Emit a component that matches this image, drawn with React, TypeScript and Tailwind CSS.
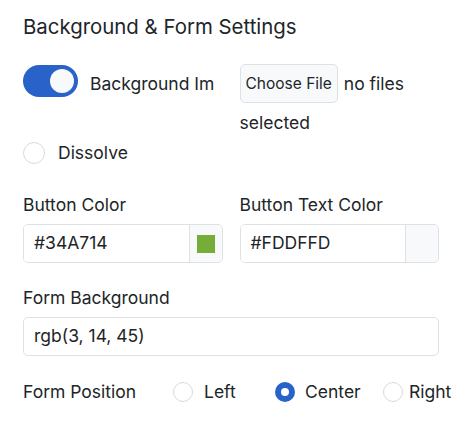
import React from 'react';

interface PositionOption {
  label: string;
  width: string;
  gap: string;
  checked: boolean;
}

const positions: PositionOption[] = [
  { label: 'Left', width: 'w-[102px]', gap: 'gap-[11px]', checked: false },
  { label: 'Center', width: 'w-[108px]', gap: 'gap-[10px]', checked: true },
  { label: 'Right', width: 'w-auto', gap: 'gap-[6px]', checked: false },
];

const Radio = ({ checked, size }: { checked: boolean; size: string }) =>
  checked ? (
    <span className={`${size} shrink-0 rounded-full bg-[#2962c9] flex items-center justify-center`}>
      <span className="w-[8px] h-[8px] rounded-full bg-white" />
    </span>
  ) : (
    <span className={`${size} shrink-0 rounded-full border border-[#d5dbe1] bg-white`} />
  );

const ColorField = ({ label, value, swatch }: { label: string; value: string; swatch: string }) => (
  <div>
    <div className="text-[17.5px] leading-[24px]">{label}</div>
    <div className="mt-[7px] h-[39px] flex border border-[#dee2e6] rounded-[5px] overflow-hidden">
      <div className="flex-1 flex items-center px-[10px] text-[17.5px] bg-white">{value}</div>
      <div className="w-[33px] border-l border-[#dee2e6] bg-[#f8f9fa] flex items-center justify-center">
        <span className="w-[18px] h-[18px]" style={{ backgroundColor: swatch }} />
      </div>
    </div>
  </div>
);

export default function App() {
  return (
    <div className="w-[462px] h-[430px] bg-white px-[23px] pt-[14px] text-[#212529] font-['Inter',sans-serif]">
      <h2 className="text-[20.4px] leading-[26px] font-normal">Background &amp; Form Settings</h2>

      {/* Image toggle + file picker */}
      <div className="mt-[24px] grid grid-cols-2 gap-[17px]">
        <div className="flex items-start">
          <span className="mt-[1px] w-[55px] h-[32px] rounded-full bg-[#2962c9] flex items-center justify-end pr-[4px] shrink-0">
            <span className="w-[24px] h-[24px] rounded-full bg-[#f8f9fa]" />
          </span>
          <span className="ml-[12px] text-[17.5px] leading-[39px] whitespace-nowrap">Background Im</span>
        </div>
        <div className="flex flex-wrap items-center gap-x-[6px] text-[17.5px] leading-[39px]">
          <span className="h-[39px] px-[5px] border border-[#dee2e6] rounded-[5px] bg-[#f8f9fa] text-[15.5px] leading-[37px]">
            Choose File
          </span>
          <span>no files</span>
          <span>selected</span>
        </div>
      </div>

      {/* Dissolve */}
      <div className="flex items-center h-[22px]">
        <Radio checked={false} size="w-[22px] h-[22px]" />
        <span className="ml-[13px] text-[17.5px]">Dissolve</span>
      </div>

      {/* Button colours */}
      <div className="mt-[29px] grid grid-cols-2 gap-[17px]">
        <ColorField label="Button Color" value="#34A714" swatch="#76ac38" />
        <ColorField label="Button Text Color" value="#FDDFFD" swatch="#f8f9fa" />
      </div>

      {/* Form background */}
      <div className="mt-[23px] text-[17.5px] leading-[24px]">Form Background</div>
      <div className="mt-[7px] h-[39px] flex items-center px-[10px] border border-[#dee2e6] rounded-[5px] text-[17.5px]">
        rgb(3, 14, 45)
      </div>

      {/* Form position */}
      <div className="mt-[24px] h-[24px] flex items-center text-[17.5px]">
        <span className="w-[150px] shrink-0">Form Position</span>
        {positions.map((p) => (
          <label key={p.label} className={`${p.width} ${p.gap} flex items-center shrink-0`}>
            <Radio checked={p.checked} size="w-[20px] h-[20px]" />
            <span>{p.label}</span>
          </label>
        ))}
      </div>
    </div>
  );
}
